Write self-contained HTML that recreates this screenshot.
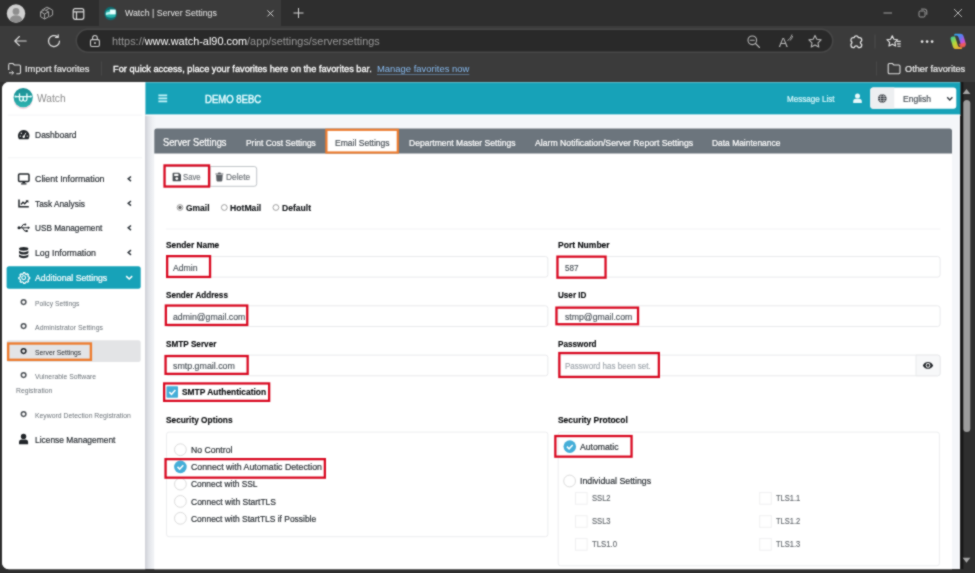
<!DOCTYPE html>
<html lang="en">
<head>
<meta charset="utf-8">
<title>Watch | Server Settings</title>
<style>
*{box-sizing:border-box;margin:0;padding:0}
html,body{width:975px;height:573px;overflow:hidden;background:#2f2f2f}
body{position:relative;font-family:"Liberation Sans",sans-serif;-webkit-font-smoothing:antialiased;filter:url(#soft)}
.a{position:absolute;display:block}
.t{position:absolute;display:block;white-space:nowrap;line-height:1;transform-origin:0 0}
</style>
</head>
<body>
<svg class="a" width="0" height="0" style="left:0;top:0"><filter id="soft" x="0" y="0" width="100%" height="100%" color-interpolation-filters="sRGB"><feConvolveMatrix order="3" kernelMatrix="1 2 1 2 10 2 1 2 1" divisor="22" edgeMode="duplicate" preserveAlpha="true"/></filter></svg>
<svg class="a" style="left:0px;top:0px" width="975" height="28"><rect x="0" y="0" width="975" height="26" fill="#2e2e2e"/></svg>
<svg class="a" style="left:0px;top:24px" width="975" height="60"><rect x="0" y="2" width="975" height="56" fill="#3b3b3b"/></svg>
<svg class="a" style="left:97px;top:0px" width="186" height="29"><rect x="2" y="0" width="182" height="27" fill="#3b3b3b"/></svg>
<svg class="a" style="left:73px;top:26px" width="763" height="29"><rect x="3.25" y="3.25" width="756.5" height="23" rx="11.75" fill="#292929" stroke="#484848" stroke-width="1.5"/></svg>
<svg class="a" style="left:6px;top:4px;" width="21" height="20"><g transform="translate(0.5,0)"><circle cx="9.5" cy="9.5" r="9.2" fill="#cfcfcf"/><circle cx="9.5" cy="7.4" r="3.4" fill="#8e8e8e"/><path d="M3.2 15.6c1-3.2 3.3-4.4 6.3-4.4s5.3 1.2 6.3 4.4c-1.6 1.9-3.9 3-6.3 3s-4.7-1.1-6.3-3z" fill="#8e8e8e"/></g></svg>
<svg class="a" style="left:39px;top:6px;" width="16" height="15"><g transform="translate(0.6,0.3)"><g fill="none" stroke="#a4a4a4" stroke-width="1" stroke-linejoin="round"><path d="M4.2 2.600l3.200-1.800 3.200 1.800"/><path d="M6.500 3.800l3.200-1.800 3.300 1.900v4.800l-3.200 1.900"/><path d="M2 4l2.200-1.200"/><path d="M1 5.500l4-2 4 2v5l-4 2.200-4-2.200z"/><path d="M1 5.500l4 2.200 4-2.200M5 7.700v5"/></g></g></svg>
<svg class="a" style="left:72px;top:8px;" width="14" height="13"><g transform="translate(0.5,0)"><rect x="0.7" y="0.7" width="10.6" height="10.6" rx="2" fill="none" stroke="#d8d8d8" stroke-width="1.2"/><path d="M0.700 3.800h10.600M4 3.800v7.500" stroke="#d8d8d8" stroke-width="1.2" fill="none"/></g></svg>
<svg class="a" style="left:103px;top:6px;" width="16" height="16"><g transform="translate(0.6,0)"><ellipse cx="7" cy="7.5" rx="6.300" ry="6.800" fill="#126a6e"/><path d="M2.200 5.500c2-2 6-2.500 9.800-1.500v6.500c-3.500 1.800-7.500 1.500-9.800-0.500z" fill="#27b3ab"/><rect x="6.400" y="3.600" width="5.700" height="4.800" fill="#e8fffe"/><path d="M2.200 6.800l4.400-1.200v2.600l-4.400 0.800z" fill="#b8f4f0"/></g></svg>
<span class="t" style="left:124.50px;top:8.21px;font-size:9.7px;color:#e8e8e8;transform:scaleX(0.9078);">Watch | Server Settings</span>
<svg class="a" style="left:266px;top:9px;" width="10" height="10"><g transform="translate(0.4,0.4)"><path d="M1 1l6 6M7 1l-6 6" stroke="#cfcfcf" stroke-width="1" fill="none"/></g></svg>
<svg class="a" style="left:293px;top:7px;" width="12" height="13"><g transform="translate(0,0.5)"><path d="M5.5 0.5v10M0.5 5.5h10" stroke="#d4d4d4" stroke-width="1" fill="none"/></g></svg>
<svg class="a" style="left:883px;top:12px;" width="10" height="3"><g transform="translate(0.5,0)"><path d="M0 1h8.5" stroke="#a0a0a0" stroke-width="1"/></g></svg>
<svg class="a" style="left:918px;top:8px;" width="11" height="11"><g transform="translate(0.5,0.5)"><rect x="0.5" y="2.5" width="6" height="6" rx="1.3" fill="none" stroke="#a8a8a8" stroke-width="0.9"/><path d="M2.6 0.6h3.7a2 2 0 0 1 2 2v3.700" fill="none" stroke="#a8a8a8" stroke-width="0.9"/></g></svg>
<svg class="a" style="left:953px;top:8px;" width="11" height="11"><g transform="translate(0.5,0.5)"><path d="M0.5 0.5l8 8M8.5 0.5l-8 8" stroke="#c4c4c4" stroke-width="0.9" fill="none"/></g></svg>
<svg class="a" style="left:13px;top:35px;" width="15" height="13"><g transform="translate(0.8,0.5)"><path d="M12.400 5.500h-11.400M5.600 1l-4.600 4.500 4.600 4.500" stroke="#d8d8d8" stroke-width="1.15" fill="none" stroke-linecap="round" stroke-linejoin="round"/></g></svg>
<svg class="a" style="left:47px;top:34px;" width="15" height="15"><g transform="translate(0,0)"><path d="M12.500 7a5.500 5.5 0 1 1-2-4.2" stroke="#dcdcdc" stroke-width="1.2" fill="none" stroke-linecap="round"/><path d="M11.200 0.800v2.700h-2.7" stroke="#dcdcdc" stroke-width="1.2" fill="none" stroke-linecap="round" stroke-linejoin="round"/></g></svg>
<svg class="a" style="left:89px;top:34px;" width="13" height="15"><g transform="translate(0.7,0.8)"><rect x="0.800" y="4.800" width="8.900" height="6.900" rx="1.500" fill="none" stroke="#cccccc" stroke-width="1.100"/><path d="M2.900 4.800v-1.700a2.350 2.350 0 0 1 4.700 0v1.700" fill="none" stroke="#cccccc" stroke-width="1.100"/><rect x="4.400" y="7.400" width="1.700" height="1.700" fill="#cccccc"/></g></svg>
<span class="t" style="left:112.4px;top:35.57px;font-size:11.3px;color:#989898;transform:scaleX(0.9645);">https://<span style="color:#ffffff">www.watch-al90.com</span>/app/settings/serversettings</span>
<svg class="a" style="left:747px;top:35px;" width="14" height="14"><g transform="translate(0,0)"><circle cx="5.3" cy="5.3" r="4.3" fill="none" stroke="#b4b4b4" stroke-width="1.1"/><path d="M8.500 8.500l4 4M3.300 5.300h4" stroke="#b4b4b4" stroke-width="1.1" fill="none" stroke-linecap="round"/></g></svg>
<span class="t" style="left:778.80px;top:35.61px;font-size:13.5px;color:#b4b4b4;">A</span>
<svg class="a" style="left:787px;top:34px;" width="7" height="8"><g transform="translate(0,0)"><path d="M0.500 6.500c2-1 3.5-3 4.5-6M2.800 6.500c1.500-1 2.3-2.5 2.8-4.5" fill="none" stroke="#b4b4b4" stroke-width="0.9"/></g></svg>
<svg class="a" style="left:808px;top:34px;" width="15" height="15"><g transform="translate(0,0.5)"><path d="M7 0.900l1.850 3.9 4.25 0.55-3.1 2.95 0.78 4.2-3.78-2.05-3.78 2.05 0.78-4.2-3.1-2.95 4.25-0.550z" fill="none" stroke="#b4b4b4" stroke-width="1.1" stroke-linejoin="round"/></g></svg>
<svg class="a" style="left:849px;top:35px;" width="16" height="15"><g transform="translate(0.6,0.2)"><path d="M4.600 2.300a2.100 2.100 0 0 1 4.100 0h1.100a2.300 2.300 0 0 1 2.300 2.300v1a1.900 1.900 0 0 0-1.300 1.800a1.900 1.900 0 0 0 1.300 1.800v0.900a2.300 2.300 0 0 1-2.300 2.300h-1.100a2.100 2.100 0 0 0-4.100 0h-0.900a2.300 2.300 0 0 1-2.300-2.300v-1.200a1.700 1.700 0 0 0 0-3v-1.300a2.300 2.300 0 0 1 2.300-2.300z" fill="none" stroke="#e4e4e4" stroke-width="1.250" stroke-linejoin="round"/></g></svg>
<svg class="a" style="left:872px;top:32px" width="6" height="19"><rect x="2.5" y="2.5" width="1" height="14" fill="#4c4c4c"/></svg>
<svg class="a" style="left:886px;top:34px;" width="16" height="16"><g transform="translate(0.4,0.8)"><path d="M7 0.900l1.850 3.9 4.25 0.55-3.1 2.95 0.78 4.2-3.78-2.05-3.78 2.05 0.78-4.2-3.1-2.95 4.25-0.550z" fill="none" stroke="#e4e4e4" stroke-width="1.300" stroke-linejoin="round" transform="translate(-0.300,0.200) scale(0.880)"/><path d="M10.300 6.600h4M10.600 9h3.700M11 11.400h3.300" stroke="#e4e4e4" stroke-width="1.150"/></g></svg>
<svg class="a" style="left:920px;top:39px;" width="15" height="6"><g transform="translate(0.3,0.8)"><circle cx="1.800" cy="1.800" r="1.350" fill="#e4e4e4"/><circle cx="6.800" cy="1.800" r="1.350" fill="#e4e4e4"/><circle cx="11.800" cy="1.800" r="1.350" fill="#e4e4e4"/></g></svg>
<svg class="a" style="left:949px;top:32px;" width="20" height="20"><g transform="translate(0.2,0.4)"><defs><linearGradient id="cg1" x1="0" y1="0" x2="1" y2="1"><stop offset="0" stop-color="#28b8f0"/><stop offset="0.400" stop-color="#5a7cf0"/><stop offset="0.700" stop-color="#c850d8"/><stop offset="1" stop-color="#f86848"/></linearGradient><linearGradient id="cg2" x1="0" y1="0" x2="0.800" y2="1"><stop offset="0" stop-color="#30c8a0"/><stop offset="0.500" stop-color="#b8d838"/><stop offset="1" stop-color="#f8a030"/></linearGradient></defs><path d="M5.800 1.400h5.400c1.600 0 2.600 0.800 3.100 2.300l2.200 7.200c0.500 1.700-0.500 2.900-2.100 2.900h-2.200l-2.900-9c-0.400-1.100-1-1.700-2.100-1.700h-2.400c0.300-1 0.600-1.700 1-1.700z" fill="url(#cg1)"/><path d="M12.200 16.600h-5.400c-1.600 0-2.600-0.800-3.100-2.300l-2.200-7.200c-0.500-1.700 0.500-2.900 2.100-2.900h2.200l2.900 9c0.400 1.100 1 1.700 2.100 1.700h2.400c-0.300 1-0.600 1.700-1 1.700z" fill="url(#cg2)"/><path d="M9.500 11.500l1.500 3.400h3c1 0 1.800-0.500 2.300-1.600l-0.800-2.600z" fill="#f05a50" opacity="0.850"/></g></svg>
<svg class="a" style="left:8px;top:62px;" width="14" height="14"><g transform="translate(0,0.5)"><path d="M0.700 2.200a1.200 1.2 0 0 1 1.2-1.200h3l1.400 1.500h5a1.200 1.2 0 0 1 1.2 1.200v6.300a1.200 1.2 0 0 1-1.2 1.200h-3" fill="none" stroke="#dcdcdc" stroke-width="1.1"/><path d="M0.700 2.500v5" stroke="#dcdcdc" stroke-width="1.1"/><path d="M1 10.300h4.500M3.700 8.500l1.900 1.8-1.9 1.8" fill="none" stroke="#dcdcdc" stroke-width="1"/></g></svg>
<span class="t" style="left:25.00px;top:63.78px;font-size:9.4px;color:#e8e8e8;transform:scaleX(0.9968);-webkit-text-stroke:0.2px #e8e8e8;">Import favorites</span>
<svg class="a" style="left:99px;top:59px" width="5" height="19"><rect x="2" y="2.5" width="1" height="14" fill="#484848"/></svg>
<span class="t" style="left:112.60px;top:63.78px;font-size:9.4px;color:#ffffff;transform:scaleX(0.9831);-webkit-text-stroke:0.3px #fff;">For quick access, place your favorites here on the favorites bar.</span>
<span class="t" style="left:377.40px;top:63.78px;font-size:9.4px;color:#86b9ee;transform:scaleX(1.0063);text-decoration:underline;text-decoration-thickness:0.8px;text-underline-offset:1.5px;text-decoration-color:rgba(134,185,238,0.45);">Manage favorites now</span>
<svg class="a" style="left:874px;top:59px" width="5" height="19"><rect x="2" y="2.5" width="1" height="14" fill="#484848"/></svg>
<svg class="a" style="left:887px;top:62px;" width="15" height="14"><g transform="translate(0.5,0.5)"><path d="M0.700 2.200a1.200 1.2 0 0 1 1.2-1.200h3l1.400 1.500h5a1.200 1.2 0 0 1 1.2 1.200v6.300a1.200 1.2 0 0 1-1.2 1.200h-9.400a1.200 1.2 0 0 1-1.2-1.200z" fill="none" stroke="#dcdcdc" stroke-width="1.1"/></g></svg>
<span class="t" style="left:905.00px;top:63.78px;font-size:9.4px;color:#ececec;transform:scaleX(0.9791);-webkit-text-stroke:0.2px #ececec;">Other favorites</span>
<svg class="a" style="left:0px;top:80px" width="963" height="492"><path d="M9 2H960.4V489.2H9A7 7 0 0 1 2 482.2V9A7 7 0 0 1 9 2Z" fill="#f4f6f9"/></svg>
<svg class="a" style="left:958px;top:80px" width="17" height="492"><rect x="2.4" y="2" width="14.6" height="487.2" fill="#2e2e2e"/></svg>
<svg class="a" style="left:958px;top:80px" width="8" height="492"><rect x="2.4" y="2" width="3" height="487.2" fill="#181818"/></svg>
<svg class="a" style="left:961px;top:98px" width="12" height="336"><rect x="2.3" y="2" width="7" height="332" rx="3.5" fill="#9c9c9c"/></svg>
<svg class="a" style="left:962px;top:88px;" width="10" height="8"><g transform="translate(0.3,0.6)"><path d="M4.200 0.400l3.900 5h-7.800z" fill="#a4a4a4"/></g></svg>
<svg class="a" style="left:962px;top:557px;" width="10" height="8"><g transform="translate(0.3,0.4)"><path d="M4.200 5.400l3.900-5h-7.800z" fill="#a4a4a4"/></g></svg>
<svg class="a" style="left:0px;top:567px" width="975" height="6"><rect x="0" y="2.2" width="975" height="4" fill="#2e2e2e"/></svg>
<svg class="a" style="left:143px;top:80px" width="820" height="37"><rect x="2.2" y="2.3" width="815.2" height="32.3" fill="#17a2b8"/></svg>
<svg class="a" style="left:0px;top:80px" width="148" height="492"><path d="M9 2H145.3V489.2H9A7 7 0 0 1 2 482.2V9A7 7 0 0 1 9 2Z" fill="#fff"/></svg>
<div class="a" style="left:145.3px;top:114.4px;width:11px;height:455px;background:linear-gradient(90deg,rgba(70,70,90,0.22),rgba(70,70,90,0.1) 35%,rgba(70,70,90,0.03) 70%,rgba(70,70,90,0) 100%);"></div>
<svg class="a" style="left:143px;top:112px" width="820" height="6"><rect x="2.3" y="2.6" width="815.1" height="1.3" fill="#fbfcfd"/></svg>
<svg class="a" style="left:12px;top:86px;" width="24" height="26"><g transform="translate(0.2,0.6)"><defs><linearGradient id="lg" x1="0" y1="0" x2="0" y2="1"><stop offset="0" stop-color="#1b8f94"/><stop offset="1" stop-color="#2db3b0"/></linearGradient></defs><ellipse cx="11" cy="13.8" rx="9.2" ry="8.8" fill="rgba(200,120,150,0.28)"/><circle cx="11" cy="11" r="9.6" fill="url(#lg)"/><g fill="none" stroke="#f2ffff" stroke-width="1.3" stroke-linecap="round" stroke-linejoin="round"><path d="M3.6 10h14.8"/><path d="M7.3 7.4v5.2a1.850 1.850 0 0 0 3.7 0v-2.600"/><path d="M14.7 7.4v5.2a1.850 1.850 0 0 1-3.7 0"/></g><circle cx="3.3" cy="10" r="1" fill="#f2ffff"/><circle cx="18.7" cy="10" r="1" fill="#f2ffff"/></g></svg>
<span class="t" style="left:37.30px;top:93.08px;font-size:11.1px;color:#8c8c8c;transform:scaleX(0.9217);">Watch</span>
<svg class="a" style="left:6px;top:112px" width="138" height="6"><rect x="2" y="2.6" width="134" height="1" fill="#f5f6f7"/></svg>
<svg class="a" style="left:6px;top:155px" width="138" height="6"><rect x="2" y="2.3" width="134" height="1" fill="#f3f4f5"/></svg>
<svg class="a" style="left:17px;top:129px;" width="14" height="13"><g transform="translate(0.6,0.5)"><path d="M6.100 0.500a5.800 5.8 0 0 0-5 8.700c0.200 0.4 0.6 0.6 1 0.600h8c0.400 0 0.8-0.2 1-0.600a5.800 5.8 0 0 0-5-8.700z" fill="#23272b"/><circle cx="6.1" cy="7.2" r="1.2" fill="#fff"/><path d="M6.300 7l2-3.7" stroke="#fff" stroke-width="0.9"/><circle cx="2.7" cy="6.6" r="0.7" fill="#fff"/><circle cx="3.7" cy="3.7" r="0.7" fill="#fff"/><circle cx="9.6" cy="6.6" r="0.7" fill="#fff"/></g></svg>
<span class="t" style="left:34.80px;top:130.38px;font-size:9.4px;color:#2a2f34;transform:scaleX(0.9068);-webkit-text-stroke:0.2px #2a2f34;">Dashboard</span>
<svg class="a" style="left:17px;top:173px;" width="14" height="13"><g transform="translate(0.8,0.2)"><rect x="0.8" y="0.8" width="10.4" height="7.4" rx="1" fill="none" stroke="#23272b" stroke-width="1.5"/><path d="M4.800 8.500h2.400l0.400 1.600h-3.200z" fill="#23272b"/><path d="M3.300 10.700h5.400" stroke="#23272b" stroke-width="1.2"/></g></svg>
<span class="t" style="left:34.80px;top:174.38px;font-size:9.4px;color:#2a2f34;transform:scaleX(0.9458);-webkit-text-stroke:0.2px #2a2f34;">Client Information</span>
<svg class="a" style="left:127px;top:175px;" width="6" height="8"><g transform="translate(0.2,0.8)"><path d="M3.800 0.700l-2.800 2.300 2.800 2.300" fill="none" stroke="#343a40" stroke-width="1.500"/></g></svg>
<svg class="a" style="left:18px;top:199px;" width="12" height="10"><g transform="translate(0.2,0.2)"><path d="M0.800 0.400v7.200h9.800" fill="none" stroke="#23272b" stroke-width="1.500"/><path d="M2.700 5.300l2.100-2.200 1.700 1.400 2.500-2.600" fill="none" stroke="#23272b" stroke-width="1.400"/><path d="M7.400 1h2.800v2.800z" fill="#23272b"/></g></svg>
<span class="t" style="left:34.80px;top:198.78px;font-size:9.4px;color:#2a2f34;transform:scaleX(0.8866);-webkit-text-stroke:0.2px #2a2f34;">Task Analysis</span>
<svg class="a" style="left:127px;top:200px;" width="6" height="8"><g transform="translate(0.2,0.3)"><path d="M3.800 0.700l-2.800 2.300 2.800 2.300" fill="none" stroke="#343a40" stroke-width="1.500"/></g></svg>
<svg class="a" style="left:17px;top:222px;" width="15" height="12"><g transform="translate(0.3,0.5)"><g fill="none" stroke="#23272b" stroke-width="1"><path d="M1.600 5.300h9.500"/><path d="M3.600 5.300l2.200-3.200h1.800"/><path d="M5.200 5.300l2.200 3.200h1.300"/></g><circle cx="1.7" cy="5.3" r="1.5" fill="#23272b"/><circle cx="8" cy="2.1" r="1" fill="#23272b"/><rect x="8.4" y="7.5" width="2" height="2" fill="#23272b"/><path d="M10.500 3.800l2.300 1.5-2.3 1.500z" fill="#23272b"/></g></svg>
<span class="t" style="left:34.80px;top:223.38px;font-size:9.4px;color:#2a2f34;transform:scaleX(0.8785);-webkit-text-stroke:0.2px #2a2f34;">USB Management</span>
<svg class="a" style="left:127px;top:224px;" width="6" height="8"><g transform="translate(0.2,0.8)"><path d="M3.800 0.700l-2.800 2.300 2.800 2.300" fill="none" stroke="#343a40" stroke-width="1.500"/></g></svg>
<svg class="a" style="left:18px;top:246px;" width="12" height="14"><g transform="translate(0.8,0.8)"><ellipse cx="4.9" cy="2" rx="4.7" ry="1.9" fill="#23272b"/><path d="M0.200 3.500c0 1 2.1 1.9 4.7 1.900s4.700-0.9 4.7-1.900v2.400c0 1-2.1 1.9-4.7 1.900s-4.7-0.9-4.7-1.900zM0.200 7.200c0 1 2.1 1.9 4.7 1.900s4.700-0.9 4.7-1.900v2.300c0 1-2.1 1.9-4.7 1.900s-4.7-0.9-4.7-1.900z" fill="#23272b"/></g></svg>
<span class="t" style="left:34.80px;top:247.98px;font-size:9.4px;color:#2a2f34;transform:scaleX(0.9347);-webkit-text-stroke:0.2px #2a2f34;">Log Information</span>
<svg class="a" style="left:127px;top:249px;" width="6" height="8"><g transform="translate(0.2,0.5)"><path d="M3.800 0.700l-2.800 2.300 2.800 2.300" fill="none" stroke="#343a40" stroke-width="1.500"/></g></svg>
<svg class="a" style="left:4px;top:264px" width="139" height="27"><rect x="2.6" y="2.3" width="134.1" height="22.5" rx="2.5" fill="#17a2b8"/></svg>
<svg class="a" style="left:18px;top:272px;" width="13" height="13"><g transform="translate(0,0)"><path d="M5.700 0.400l1.100 0.2 0.4 1.3 1 0.5 1.2-0.6 1 0.9-0.5 1.2 0.5 1 1.3 0.4 0 1.3-1.3 0.5-0.4 1 0.6 1.2-0.9 0.9-1.3-0.5-1 0.5-0.4 1.300h-1.300l-0.5-1.3-1-0.4-1.2 0.6-0.9-0.9 0.5-1.3-0.5-1-1.3-0.400v-1.300l1.300-0.5 0.4-1-0.6-1.2 0.9-0.9 1.3 0.5 1-0.500z" fill="none" stroke="#fff" stroke-width="1.2" stroke-linejoin="round"/><circle cx="5.7" cy="5.7" r="1.9" fill="none" stroke="#fff" stroke-width="1.1"/></g></svg>
<span class="t" style="left:34.80px;top:272.78px;font-size:9.4px;color:#ffffff;transform:scaleX(0.9297);-webkit-text-stroke:0.2px #ffffff;">Additional Settings</span>
<svg class="a" style="left:125px;top:275px;" width="9" height="7"><g transform="translate(0.5,0.3)"><path d="M0.700 0.800l3 2.9 3-2.9" fill="none" stroke="#fff" stroke-width="1.5"/></g></svg>
<svg class="a" style="left:20px;top:298px;" width="8" height="9"><g transform="translate(0.4,0.9)"><circle cx="3.2" cy="3.2" r="2.3" fill="none" stroke="#4f5459" stroke-width="1.5"/></g></svg>
<span class="t" style="left:34.60px;top:299.74px;font-size:7.6px;color:#6b7278;transform:scaleX(0.8934);">Policy Settings</span>
<svg class="a" style="left:20px;top:322px;" width="8" height="9"><g transform="translate(0.4,0.9)"><circle cx="3.2" cy="3.2" r="2.3" fill="none" stroke="#4f5459" stroke-width="1.5"/></g></svg>
<span class="t" style="left:34.60px;top:323.54px;font-size:7.6px;color:#6b7278;transform:scaleX(0.9154);">Administrator Settings</span>
<svg class="a" style="left:4px;top:338px" width="139" height="26"><rect x="2.6" y="2.2" width="134.1" height="21.7" rx="2.5" fill="#e3e4e6"/></svg>
<svg class="a" style="left:20px;top:347px;" width="8" height="9"><g transform="translate(0.4,0.9)"><circle cx="3.2" cy="3.2" r="2.3" fill="none" stroke="#23272b" stroke-width="1.5"/></g></svg>
<span class="t" style="left:34.60px;top:348.84px;font-size:7.6px;color:#2a2e32;transform:scaleX(0.8898);">Server Settings</span>
<svg class="a" style="left:5px;top:340px" width="90" height="23"><rect x="3.2" y="3.5" width="82.7" height="16.3" fill="none" stroke="#ed7d31" stroke-width="2.4"/></svg>
<svg class="a" style="left:20px;top:371px;" width="8" height="9"><g transform="translate(0.4,0.9)"><circle cx="3.2" cy="3.2" r="2.3" fill="none" stroke="#4f5459" stroke-width="1.5"/></g></svg>
<span class="t" style="left:34.60px;top:373.44px;font-size:7.6px;color:#6b7278;transform:scaleX(0.8956);">Vulnerable Software</span>
<span class="t" style="left:16.10px;top:387.14px;font-size:7.6px;color:#6b7278;transform:scaleX(0.8981);">Registration</span>
<svg class="a" style="left:20px;top:410px;" width="8" height="9"><g transform="translate(0.4,0.9)"><circle cx="3.2" cy="3.2" r="2.3" fill="none" stroke="#4f5459" stroke-width="1.5"/></g></svg>
<span class="t" style="left:34.60px;top:411.94px;font-size:7.6px;color:#6b7278;transform:scaleX(0.9015);">Keyword Detection Registration</span>
<svg class="a" style="left:18px;top:433px;" width="12" height="13"><g transform="translate(0.8,0.5)"><circle cx="4.75" cy="2.9" r="2.7" fill="#23272b"/><path d="M0.200 10.800v-2a2.800 2.8 0 0 1 2.8-2.800h3.500a2.800 2.8 0 0 1 2.8 2.800v2z" fill="#23272b"/></g></svg>
<span class="t" style="left:34.60px;top:434.82px;font-size:9.5px;color:#2a2f34;transform:scaleX(0.8850);-webkit-text-stroke:0.2px #2a2f34;">License Management</span>
<svg class="a" style="left:158px;top:94px;" width="11" height="10"><g transform="translate(0.4,0.2)"><path d="M0 1.200h8.800M0 4.200h8.800M0 7.200h8.800" stroke="#c4f3f9" stroke-width="1.800"/></g></svg>
<span class="t" style="left:204.50px;top:93.77px;font-size:10.7px;color:#e6fbfe;transform:scaleX(0.8927);-webkit-text-stroke:0.45px #e6fbfe;">DEMO 8EBC</span>
<span class="t" style="left:787.30px;top:93.78px;font-size:9.4px;color:#d8f6fa;transform:scaleX(0.8618);-webkit-text-stroke:0.2px #d8f6fa;">Message List</span>
<svg class="a" style="left:853px;top:93px;" width="10" height="12"><g transform="translate(0,0.2)"><circle cx="4.5" cy="2.7" r="2.5" fill="#e8f8fa"/><path d="M0.200 9.900v-1.700a2.700 2.7 0 0 1 2.7-2.700h3.200a2.700 2.7 0 0 1 2.7 2.700v1.700z" fill="#e8f8fa"/></g></svg>
<svg class="a" style="left:868px;top:85px" width="91" height="26"><rect x="2.3" y="2.5" width="86" height="21.3" rx="3" fill="#ffffff"/></svg>
<svg class="a" style="left:868px;top:85px" width="29" height="26"><path d="M5.3 2.5H26.3V23.8H5.3A3 3 0 0 1 2.3 20.8V5.5A3 3 0 0 1 5.3 2.5Z" fill="#edeff1"/></svg>
<svg class="a" style="left:877px;top:94px;" width="11" height="10"><g transform="translate(0.8,0)"><circle cx="4.5" cy="4.5" r="4.3" fill="#30343a"/><g fill="none" stroke="#e9ecef" stroke-width="0.55"><ellipse cx="4.5" cy="4.5" rx="1.9" ry="4.3"/><path d="M0.200 4.500h8.600M0.900 2.400h7.200M0.900 6.600h7.200"/></g></g></svg>
<span class="t" style="left:902.80px;top:93.78px;font-size:9.4px;color:#495057;transform:scaleX(0.9106);-webkit-text-stroke:0.2px #495057;">English</span>
<svg class="a" style="left:946px;top:96px;" width="9" height="7"><g transform="translate(0.5,0.5)"><path d="M0.700 0.800l2.600 2.6 2.6-2.6" fill="none" stroke="#343a40" stroke-width="1.4"/></g></svg>
<svg class="a" style="left:152px;top:126px" width="802" height="446"><path d="M5.3 2.6H797A3 3 0 0 1 800 5.6V443.2H2.3V5.6A3 3 0 0 1 5.3 2.6Z" fill="#ffffff"/></svg>
<svg class="a" style="left:152px;top:126px" width="802" height="30"><path d="M4.8 2.6H797.5A2.5 2.5 0 0 1 800 5.1V27.6H2.3V5.1A2.5 2.5 0 0 1 4.8 2.6Z" fill="#6c757d"/></svg>
<span class="t" style="left:163.00px;top:137.57px;font-size:10.1px;color:#ffffff;transform:scaleX(0.9201);-webkit-text-stroke:0.2px #fff;">Server Settings</span>
<span class="t" style="left:245.50px;top:139.34px;font-size:9.3px;color:#ffffff;transform:scaleX(0.9065);-webkit-text-stroke:0.2px #ffffff;">Print Cost Settings</span>
<svg class="a" style="left:323px;top:126px" width="78" height="30"><rect x="3.4" y="3.8" width="71.4" height="22.7" fill="#fff" stroke="#ed7d31" stroke-width="2.2"/></svg>
<span class="t" style="left:335.20px;top:139.34px;font-size:9.3px;color:#495057;transform:scaleX(0.9186);-webkit-text-stroke:0.2px #495057;">Email Settings</span>
<span class="t" style="left:409.00px;top:139.34px;font-size:9.3px;color:#ffffff;transform:scaleX(0.9201);-webkit-text-stroke:0.2px #ffffff;">Department Master Settings</span>
<span class="t" style="left:534.90px;top:139.34px;font-size:9.3px;color:#ffffff;transform:scaleX(0.9328);-webkit-text-stroke:0.2px #ffffff;">Alarm Notification/Server Report Settings</span>
<span class="t" style="left:712.30px;top:139.34px;font-size:9.3px;color:#ffffff;transform:scaleX(0.9063);-webkit-text-stroke:0.2px #ffffff;">Data Maintenance</span>
<svg class="a" style="left:161px;top:164px" width="99" height="25"><rect x="3.3" y="2.5" width="92.4" height="19.8" rx="2.5" fill="#ffffff" stroke="#c2c6ca" stroke-width="1"/></svg>
<svg class="a" style="left:207px;top:164px" width="6" height="25"><rect x="2.8" y="2" width="1" height="20.8" fill="#c2c6ca"/></svg>
<svg class="a" style="left:172px;top:172px;" width="10" height="11"><g transform="translate(0.6,0.7)"><path d="M0.900 0h5.500l2 2v5.700a0.900 0.9 0 0 1-0.9 0.900h-6.600a0.900 0.9 0 0 1-0.9-0.900v-6.800a0.900 0.9 0 0 1 0.9-0.900z" fill="#4a4f54"/><rect x="1.6" y="1.1" width="4.2" height="2.2" fill="#fff"/><circle cx="4.2" cy="5.9" r="1.4" fill="#fff"/></g></svg>
<span class="t" style="left:183.10px;top:172.95px;font-size:8.7px;color:#6c7176;transform:scaleX(0.8934);-webkit-text-stroke:0.15px #6c7176;">Save</span>
<svg class="a" style="left:215px;top:172px;" width="10" height="11"><g transform="translate(0.5,0.4)"><path d="M0 1.100h2.300l0.500-1h2.200l0.500 1h2.300v1h-7.800z" fill="#5c6166"/><path d="M0.600 2.700h6.600l-0.4 5.500a0.800 0.8 0 0 1-0.8 0.800h-4.200a0.800 0.8 0 0 1-0.8-0.800z" fill="#5c6166"/></g></svg>
<span class="t" style="left:225.50px;top:172.95px;font-size:8.7px;color:#6c7176;transform:scaleX(0.9592);-webkit-text-stroke:0.15px #6c7176;">Delete</span>
<svg class="a" style="left:161px;top:162px" width="52" height="28"><rect x="3.55" y="3.45" width="44.5" height="21.1" fill="none" stroke="#d90a22" stroke-width="2.3"/></svg>
<svg class="a" style="left:176px;top:203px;" width="9" height="10"><g transform="translate(0.2,0.7)"><circle cx="3.8" cy="3.8" r="2.9" fill="#fff" stroke="#8a8a8a" stroke-width="0.8"/><circle cx="3.8" cy="3.8" r="1.7" fill="#666"/></g></svg>
<span class="t" style="left:186.40px;top:203.64px;font-size:9.3px;color:#16191c;font-weight:700;transform:scaleX(0.9093);-webkit-text-stroke:0.15px #16191c;">Gmail</span>
<svg class="a" style="left:220px;top:203px;" width="10" height="10"><g transform="translate(0.5,0.7)"><circle cx="3.8" cy="3.8" r="2.9" fill="#fff" stroke="#8a8a8a" stroke-width="0.8"/></g></svg>
<span class="t" style="left:230.40px;top:203.64px;font-size:9.3px;color:#16191c;font-weight:700;transform:scaleX(0.9292);-webkit-text-stroke:0.15px #16191c;">HotMail</span>
<svg class="a" style="left:272px;top:203px;" width="9" height="10"><g transform="translate(0.1,0.7)"><circle cx="3.8" cy="3.8" r="2.9" fill="#fff" stroke="#8a8a8a" stroke-width="0.8"/></g></svg>
<span class="t" style="left:282.10px;top:203.64px;font-size:9.3px;color:#16191c;font-weight:700;transform:scaleX(0.9234);-webkit-text-stroke:0.15px #16191c;">Default</span>
<svg class="a" style="left:164px;top:226px" width="779" height="6"><rect x="2" y="2.5" width="774.5" height="1" fill="#f3f4f5"/></svg>
<span class="t" style="left:166.00px;top:240.46px;font-size:9.6px;color:#0c0e10;font-weight:700;transform:scaleX(0.8675);-webkit-text-stroke:0.15px #0c0e10;">Sender Name</span>
<span class="t" style="left:557.50px;top:240.46px;font-size:9.6px;color:#0c0e10;font-weight:700;transform:scaleX(0.8897);-webkit-text-stroke:0.15px #0c0e10;">Port Number</span>
<svg class="a" style="left:164px;top:254px" width="387" height="26"><rect x="2.5" y="2.5" width="381.4" height="20.6" rx="2.5" fill="#fff" stroke="#e9eaec" stroke-width="1"/></svg>
<svg class="a" style="left:555px;top:254px" width="388" height="26"><rect x="3" y="2.5" width="382.1" height="20.6" rx="2.5" fill="#fff" stroke="#e9eaec" stroke-width="1"/></svg>
<span class="t" style="left:172.90px;top:262.52px;font-size:9.5px;color:#495057;transform:scaleX(0.9132);-webkit-text-stroke:0.15px #495057;">Admin</span>
<span class="t" style="left:564.50px;top:262.52px;font-size:9.5px;color:#495057;transform:scaleX(0.8512);-webkit-text-stroke:0.15px #495057;">587</span>
<svg class="a" style="left:164px;top:253px" width="50" height="28"><rect x="3.15" y="3.15" width="42.9" height="20.8" fill="none" stroke="#d90a22" stroke-width="2.3"/></svg>
<svg class="a" style="left:554px;top:253px" width="55" height="28"><rect x="3.45" y="3.65" width="48.1" height="21" fill="none" stroke="#d90a22" stroke-width="2.3"/></svg>
<span class="t" style="left:166.00px;top:289.56px;font-size:9.6px;color:#0c0e10;font-weight:700;transform:scaleX(0.8452);-webkit-text-stroke:0.15px #0c0e10;">Sender Address</span>
<span class="t" style="left:557.50px;top:289.56px;font-size:9.6px;color:#0c0e10;font-weight:700;transform:scaleX(0.8454);-webkit-text-stroke:0.15px #0c0e10;">User ID</span>
<svg class="a" style="left:164px;top:303px" width="387" height="26"><rect x="2.5" y="2.8" width="381.4" height="20.7" rx="2.5" fill="#fff" stroke="#e9eaec" stroke-width="1"/></svg>
<svg class="a" style="left:555px;top:303px" width="388" height="26"><rect x="3" y="2.8" width="382.1" height="20.7" rx="2.5" fill="#fff" stroke="#e9eaec" stroke-width="1"/></svg>
<span class="t" style="left:172.90px;top:312.02px;font-size:9.5px;color:#495057;transform:scaleX(0.9174);-webkit-text-stroke:0.15px #495057;">admin@gmail.com</span>
<span class="t" style="left:564.90px;top:312.02px;font-size:9.5px;color:#495057;transform:scaleX(0.9153);-webkit-text-stroke:0.15px #495057;">stmp@gmail.com</span>
<svg class="a" style="left:162px;top:302px" width="89" height="27"><rect x="3.85" y="3.55" width="81.4" height="19.4" fill="none" stroke="#d90a22" stroke-width="2.3"/></svg>
<svg class="a" style="left:553px;top:304px" width="89" height="24"><rect x="3.45" y="3.65" width="81.6" height="16.6" fill="none" stroke="#d90a22" stroke-width="2.3"/></svg>
<span class="t" style="left:166.00px;top:339.06px;font-size:9.6px;color:#0c0e10;font-weight:700;transform:scaleX(0.8540);-webkit-text-stroke:0.15px #0c0e10;">SMTP Server</span>
<span class="t" style="left:557.50px;top:339.06px;font-size:9.6px;color:#0c0e10;font-weight:700;transform:scaleX(0.8516);-webkit-text-stroke:0.15px #0c0e10;">Password</span>
<svg class="a" style="left:164px;top:352px" width="387" height="27"><rect x="2.5" y="3.1" width="381.4" height="20.7" rx="2.5" fill="#fff" stroke="#e9eaec" stroke-width="1"/></svg>
<svg class="a" style="left:555px;top:352px" width="388" height="27"><rect x="3" y="3.1" width="382.1" height="20.7" rx="2.5" fill="#fff" stroke="#e9eaec" stroke-width="1"/></svg>
<svg class="a" style="left:913px;top:352px" width="30" height="27"><path d="M3 3.1H24.6A2.5 2.5 0 0 1 27.1 5.6V21.3A2.5 2.5 0 0 1 24.6 23.8H3V3.1Z" fill="#f7f8f9" stroke="#e9eaec" stroke-width="1"/></svg>
<svg class="a" style="left:922px;top:361px;" width="13" height="9"><g transform="translate(0.6,0.8)"><path d="M0.200 3.600c1.200-2.2 3-3.4 5.2-3.400s4 1.2 5.2 3.400c-1.2 2.2-3 3.4-5.2 3.400s-4-1.2-5.2-3.400z" fill="#24282c"/><circle cx="5.4" cy="3.6" r="2.3" fill="#fff"/><circle cx="5.4" cy="3.6" r="1.4" fill="#24282c"/></g></svg>
<span class="t" style="left:172.90px;top:361.12px;font-size:9.5px;color:#495057;transform:scaleX(0.9306);-webkit-text-stroke:0.15px #495057;">smtp.gmail.com</span>
<span class="t" style="left:564.90px;top:360.82px;font-size:9.5px;color:#9ca3aa;transform:scaleX(0.8461);-webkit-text-stroke:0.15px #9ca3aa;">Password has been set.</span>
<svg class="a" style="left:162px;top:352px" width="89" height="25"><rect x="3.55" y="4.05" width="82.1" height="17.8" fill="none" stroke="#d90a22" stroke-width="2.3"/></svg>
<svg class="a" style="left:556px;top:349px" width="106" height="32"><rect x="3.35" y="4.05" width="99.5" height="23.9" fill="none" stroke="#d90a22" stroke-width="2.3"/></svg>
<svg class="a" style="left:166px;top:386px;" width="13" height="13"><g transform="translate(0.5,0.2)"><rect width="11.5" height="11.5" rx="0.8" fill="#45aed8"/><path d="M2.800 5.900l2.200 2.2 3.9-4.3" fill="none" stroke="#fff" stroke-width="1.5"/></g></svg>
<span class="t" style="left:182.40px;top:386.86px;font-size:9.6px;color:#0c0e10;font-weight:700;transform:scaleX(0.8766);-webkit-text-stroke:0.15px #0c0e10;">SMTP Authentication</span>
<svg class="a" style="left:161px;top:380px" width="112" height="24"><rect x="3.15" y="3.45" width="105" height="17.4" fill="none" stroke="#d90a22" stroke-width="2.3"/></svg>
<span class="t" style="left:166.00px;top:415.16px;font-size:9.6px;color:#0c0e10;font-weight:700;transform:scaleX(0.8663);-webkit-text-stroke:0.15px #0c0e10;">Security Options</span>
<span class="t" style="left:557.50px;top:415.16px;font-size:9.6px;color:#0c0e10;font-weight:700;transform:scaleX(0.8787);-webkit-text-stroke:0.15px #0c0e10;">Security Protocol</span>
<svg class="a" style="left:164px;top:429px" width="387" height="111"><rect x="2.5" y="3.1" width="381.4" height="104.6" rx="2.5" fill="#fff" stroke="#ecedef" stroke-width="1"/></svg>
<svg class="a" style="left:555px;top:429px" width="387" height="140"><rect x="3.2" y="3.1" width="381.2" height="133.7" rx="2.5" fill="#fff" stroke="#ecedef" stroke-width="1"/></svg>
<svg class="a" style="left:173px;top:443px;" width="15" height="15"><g transform="translate(0.9,0.2)"><circle cx="6.5" cy="6.5" r="5.9" fill="#fff" stroke="#dcdcdc" stroke-width="1"/></g></svg>
<span class="t" style="left:191.00px;top:445.02px;font-size:9.5px;color:#2b3035;transform:scaleX(0.9115);-webkit-text-stroke:0.2px #2b3035;">No Control</span>
<svg class="a" style="left:173px;top:460px;" width="15" height="15"><g transform="translate(0.9,0.4)"><circle cx="6.5" cy="6.5" r="6.3" fill="#45aed8"/><path d="M3.600 6.500l2.200 2.2 3.6-3.9" fill="none" stroke="#fff" stroke-width="1.5"/></g></svg>
<span class="t" style="left:191.00px;top:462.22px;font-size:9.5px;color:#2b3035;transform:scaleX(0.9215);-webkit-text-stroke:0.2px #2b3035;">Connect with Automatic Detection</span>
<svg class="a" style="left:173px;top:477px;" width="15" height="15"><g transform="translate(0.9,0.6)"><circle cx="6.5" cy="6.5" r="5.9" fill="#fff" stroke="#dcdcdc" stroke-width="1"/></g></svg>
<span class="t" style="left:191.00px;top:479.42px;font-size:9.5px;color:#2b3035;transform:scaleX(0.8806);-webkit-text-stroke:0.2px #2b3035;">Connect with SSL</span>
<svg class="a" style="left:173px;top:494px;" width="15" height="15"><g transform="translate(0.9,0.9)"><circle cx="6.5" cy="6.5" r="5.9" fill="#fff" stroke="#dcdcdc" stroke-width="1"/></g></svg>
<span class="t" style="left:191.00px;top:496.72px;font-size:9.5px;color:#2b3035;transform:scaleX(0.8943);-webkit-text-stroke:0.2px #2b3035;">Connect with StartTLS</span>
<svg class="a" style="left:173px;top:511px;" width="15" height="15"><g transform="translate(0.9,0.8)"><circle cx="6.5" cy="6.5" r="5.9" fill="#fff" stroke="#dcdcdc" stroke-width="1"/></g></svg>
<span class="t" style="left:191.00px;top:513.62px;font-size:9.5px;color:#2b3035;transform:scaleX(0.8880);-webkit-text-stroke:0.2px #2b3035;">Connect with StartTLS if Possible</span>
<svg class="a" style="left:162px;top:456px" width="166" height="25"><rect x="3.55" y="3.15" width="159.3" height="18.5" fill="none" stroke="#d90a22" stroke-width="2.3"/></svg>
<svg class="a" style="left:563px;top:440px;" width="15" height="15"><g transform="translate(0.3,0.1)"><circle cx="6.5" cy="6.5" r="6.3" fill="#45aed8"/><path d="M3.600 6.500l2.200 2.2 3.6-3.9" fill="none" stroke="#fff" stroke-width="1.5"/></g></svg>
<span class="t" style="left:580.10px;top:441.92px;font-size:9.5px;color:#2b3035;transform:scaleX(0.9112);-webkit-text-stroke:0.2px #2b3035;">Automatic</span>
<svg class="a" style="left:552px;top:432px" width="83" height="28"><rect x="3.35" y="4.05" width="76.2" height="20.6" fill="none" stroke="#d90a22" stroke-width="2.3"/></svg>
<svg class="a" style="left:563px;top:474px;" width="15" height="15"><g transform="translate(0.1,0.5)"><circle cx="6.5" cy="6.5" r="5.9" fill="#fff" stroke="#dcdcdc" stroke-width="1"/></g></svg>
<span class="t" style="left:580.20px;top:476.32px;font-size:9.5px;color:#2b3035;transform:scaleX(0.9221);-webkit-text-stroke:0.2px #2b3035;">Individual Settings</span>
<svg class="a" style="left:573px;top:490px" width="17" height="17"><rect x="2.5" y="2.6" width="11.6" height="11.6" fill="#fff" stroke="#f0f0f1" stroke-width="1"/></svg>
<span class="t" style="left:591.70px;top:493.54px;font-size:9.3px;color:#63686d;transform:scaleX(0.8176);-webkit-text-stroke:0.15px #63686d;">SSL2</span>
<svg class="a" style="left:757px;top:490px" width="17" height="17"><rect x="2.7" y="2.6" width="11.6" height="11.6" fill="#fff" stroke="#f0f0f1" stroke-width="1"/></svg>
<span class="t" style="left:776.00px;top:493.54px;font-size:9.3px;color:#63686d;transform:scaleX(0.8071);-webkit-text-stroke:0.15px #63686d;">TLS1.1</span>
<svg class="a" style="left:573px;top:513px" width="17" height="17"><rect x="2.5" y="2.7" width="11.6" height="11.6" fill="#fff" stroke="#f0f0f1" stroke-width="1"/></svg>
<span class="t" style="left:591.70px;top:516.64px;font-size:9.3px;color:#63686d;transform:scaleX(0.8176);-webkit-text-stroke:0.15px #63686d;">SSL3</span>
<svg class="a" style="left:757px;top:513px" width="17" height="17"><rect x="2.7" y="2.7" width="11.6" height="11.6" fill="#fff" stroke="#f0f0f1" stroke-width="1"/></svg>
<span class="t" style="left:776.00px;top:516.64px;font-size:9.3px;color:#63686d;transform:scaleX(0.8071);-webkit-text-stroke:0.15px #63686d;">TLS1.2</span>
<svg class="a" style="left:573px;top:536px" width="17" height="17"><rect x="2.5" y="2.6" width="11.6" height="11.6" fill="#fff" stroke="#f0f0f1" stroke-width="1"/></svg>
<span class="t" style="left:591.70px;top:539.54px;font-size:9.3px;color:#63686d;transform:scaleX(0.8371);-webkit-text-stroke:0.15px #63686d;">TLS1.0</span>
<svg class="a" style="left:757px;top:536px" width="17" height="17"><rect x="2.7" y="2.6" width="11.6" height="11.6" fill="#fff" stroke="#f0f0f1" stroke-width="1"/></svg>
<span class="t" style="left:776.00px;top:539.54px;font-size:9.3px;color:#63686d;transform:scaleX(0.8071);-webkit-text-stroke:0.15px #63686d;">TLS1.3</span>
</body>
</html>
